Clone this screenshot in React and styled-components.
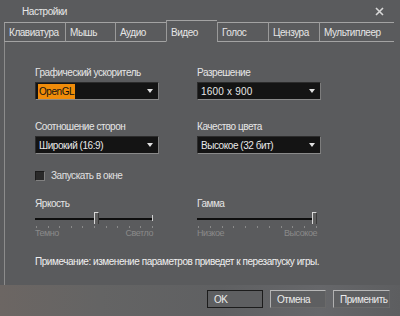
import React from 'react';
import styled, { createGlobalStyle } from 'styled-components';

const Global = createGlobalStyle`
  html, body { margin: 0; padding: 0; background: #5a5b5d; }
  body {
    width: 400px; height: 316px; overflow: hidden;
    font-family: "Liberation Sans", Arial, sans-serif;
  }
`;

const Window = styled.div`
  width: 400px;
  height: 316px;
  display: flex;
  flex-direction: column;
  background: #5a5b5d;
  color: #e4e4e4;
  font-size: 10px;
  letter-spacing: -0.45px;
`;

const TitleBar = styled.div`
  height: 20px;
  display: flex;
  align-items: center;
  justify-content: space-between;
  padding: 3px 16px 0 22px;
  box-sizing: border-box;
  color: #e8e8e8;
`;

const Close = styled.svg`
  width: 9px;
  height: 9px;
`;

const Tabs = styled.div`
  height: 22px;
  display: flex;
  align-items: flex-end;
  padding-left: 4px;
`;

const Tab = styled.div`
  box-sizing: border-box;
  width: ${p => p.w}px;
  height: ${p => (p.active ? 22 : 20)}px;
  border-top: 1px solid #a3a3a3;
  border-left: 1px solid #9a9a9a;
  border-bottom: ${p => (p.active ? '1px solid transparent' : '1px solid #a3a3a3')};
  padding: 0 0 0 4px;
  display: flex;
  align-items: center;
  padding-top: ${p => (p.active ? 2 : 0)}px;
  color: #e6e6e6;
  white-space: nowrap;
`;

const Panel = styled.div`
  flex: 1;
  margin-left: 4px;
  border-left: 1px solid #8c8c8c;
  padding: 24px 0 0 30px;
  display: flex;
  flex-direction: column;
`;

const Grid = styled.div`
  display: grid;
  grid-template-columns: 124px 124px;
  column-gap: 38px;
  row-gap: 20px;
`;

const Field = styled.div`
  display: flex;
  flex-direction: column;
  gap: 3px;
`;

const Label = styled.div`
  height: 13px;
  line-height: 13px;
  color: #e6e6e6;
  white-space: nowrap;
`;

const Select = styled.div`
  box-sizing: border-box;
  height: 18px;
  background: #141414;
  border-top: 1px solid #2c2c2c;
  border-left: 1px solid #2c2c2c;
  border-right: 1px solid #7d7d7d;
  border-bottom: 1px solid #8a8a8a;
  display: flex;
  align-items: center;
  justify-content: space-between;
  padding: 0 5px 0 2px;
  color: #e8e8e8;
`;

const Value = styled.span`
  padding: 1px 1px;
  background: ${p => (p.selected ? '#f08c0a' : 'transparent')};
  color: ${p => (p.selected ? '#111' : '#e8e8e8')};
  line-height: 13px;
  letter-spacing: ${p => (p.wide ? '0.2px' : 'inherit')};
`;

const Arrow = styled.span`
  width: 0;
  height: 0;
  border-left: 3px solid transparent;
  border-right: 3px solid transparent;
  border-top: 4px solid #e0e0e0;
`;

const CheckRow = styled.label`
  margin-top: 16px;
  display: flex;
  align-items: center;
  gap: 6px;
  height: 11px;
  color: #e0e0e0;
`;

const Box = styled.span`
  box-sizing: border-box;
  width: 10px;
  height: 10px;
  background: #2a2a2a;
  border-top: 1px solid #1a1a1a;
  border-left: 1px solid #1a1a1a;
  border-right: 1px solid #808080;
  border-bottom: 1px solid #808080;
`;

const SliderGrid = styled(Grid)`
  margin-top: 16px;
  grid-template-columns: 124px 124px;
`;

const SliderField = styled.div`
  display: flex;
  flex-direction: column;
  width: ${p => p.w}px;
`;

const SliderBox = styled.div`
  position: relative;
  height: 12px;
  margin-top: 2px;
`;

const Track = styled.div`
  position: absolute;
  left: 0;
  right: 0;
  top: 6px;
  height: 2px;
  background: #0e0e0e;
`;

const EndCap = styled.div`
  position: absolute;
  right: 0;
  top: 3px;
  width: 1px;
  height: 6px;
  background: #cfcfcf;
`;

const Thumb = styled.div`
  position: absolute;
  top: 0;
  box-sizing: border-box;
  width: 5px;
  height: 12px;
  background: #5e5e5e;
  border-top: 1px solid #d8d8d8;
  border-left: 1px solid #d8d8d8;
  border-right: 1px solid #3a3a3a;
`;

const Ticks = styled.div`
  display: flex;
  justify-content: space-between;
  margin-top: 2px;
  padding: 0 0 0 1px;
`;

const Tick = styled.span`
  width: 1px;
  height: 2px;
  background: #8a8a8a;
`;

const Scale = styled.div`
  display: flex;
  justify-content: space-between;
  color: #8a8a8a;
  font-size: 9px;
  line-height: 10px;
`;

const Note = styled.div`
  margin-top: 18px;
  color: #f0f0f0;
  white-space: nowrap;
`;

const Footer = styled.div`
  height: 31px;
  box-sizing: border-box;
  padding: 5px 10px 0 0;
  display: flex;
  justify-content: flex-end;
  gap: 7px;
  background: linear-gradient(90deg, #6c6663 0%, #646464 25%, #5f6062 55%, #66676a 80%, #5d5e60 100%);
`;

const Button = styled.div`
  box-sizing: border-box;
  width: ${p => p.w}px;
  height: 18px;
  padding-left: 6px;
  display: flex;
  align-items: center;
  background: #5e5f61;
  color: #ececec;
  border: 1px solid ${p => (p.primary ? '#1c1c1c' : '#6a6a6a')};
  border-top-color: ${p => (p.primary ? '#1c1c1c' : '#b8b8b8')};
  border-left-color: ${p => (p.primary ? '#1c1c1c' : '#b0b0b0')};
`;

function Slider({ label, width, value, low, high }) {
  return (
    <SliderField w={width}>
      <Label>{label}</Label>
      <SliderBox>
        <Track />
        <EndCap />
        <Thumb style={{ left: `calc(${value}% - ${value >= 100 ? 5 : 2}px)` }} />
      </SliderBox>
      <Ticks>
        {Array.from({ length: 11 }).map((_, i) => (
          <Tick key={i} />
        ))}
      </Ticks>
      <Scale>
        <span>{low}</span>
        <span>{high}</span>
      </Scale>
    </SliderField>
  );
}

const tabs = [
  ['Клавиатура', 61],
  ['Мышь', 50],
  ['Аудио', 51],
  ['Видео', 51, true],
  ['Голос', 51],
  ['Цензура', 51],
  ['Мультиплеер', 75],
];

export default function App() {
  return (
    <>
      <Global />
      <Window>
        <TitleBar>
          <span>Настройки</span>
          <Close viewBox="0 0 9 9">
            <path d="M1 1 L8 8 M8 1 L1 8" stroke="#d8d8d8" strokeWidth="1.6" />
          </Close>
        </TitleBar>
        <Tabs>
          {tabs.map(([t, w, a]) => (
            <Tab key={t} w={w} active={a}>{t}</Tab>
          ))}
        </Tabs>
        <Panel>
          <Grid>
            <Field>
              <Label>Графический ускоритель</Label>
              <Select>
                <Value selected>OpenGL</Value>
                <Arrow />
              </Select>
            </Field>
            <Field>
              <Label>Разрешение</Label>
              <Select>
                <Value wide>1600 x 900</Value>
                <Arrow />
              </Select>
            </Field>
            <Field>
              <Label>Соотношение сторон</Label>
              <Select>
                <Value>Широкий (16:9)</Value>
                <Arrow />
              </Select>
            </Field>
            <Field>
              <Label>Качество цвета</Label>
              <Select>
                <Value>Высокое (32 бит)</Value>
                <Arrow />
              </Select>
            </Field>
          </Grid>
          <CheckRow>
            <Box />
            <span>Запускать в окне</span>
          </CheckRow>
          <SliderGrid>
            <Slider label="Яркость" width={118} value={52} low="Темно" high="Светло" />
            <Slider label="Гамма" width={120} value={100} low="Низкое" high="Высокое" />
          </SliderGrid>
          <Note>Примечание: изменение параметров приведет к перезапуску игры.</Note>
        </Panel>
        <Footer>
          <Button w={56} primary>OK</Button>
          <Button w={56}>Отмена</Button>
          <Button w={57}>Применить</Button>
        </Footer>
      </Window>
    </>
  );
}
